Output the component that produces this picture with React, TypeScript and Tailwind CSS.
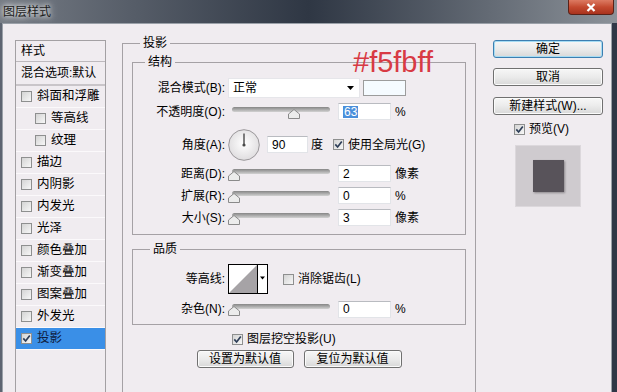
import React from "react";

const styles = [
  { name: "斜面和浮雕" },
  { name: "等高线", sub: true },
  { name: "纹理", sub: true },
  { name: "描边" },
  { name: "内阴影" },
  { name: "内发光" },
  { name: "光泽" },
  { name: "颜色叠加" },
  { name: "渐变叠加" },
  { name: "图案叠加" },
  { name: "外发光" },
  { name: "投影", active: true },
];

function Check({ on }: { on?: boolean }) {
  return (
    <span className="flex h-[11px] w-[11px] shrink-0 items-center justify-center border border-[#8e8f8f] bg-linear-to-br from-[#d4d4d4] to-[#f7f7f7]">
      {on && (
        <svg width="9" height="9" viewBox="0 0 9 9">
          <path d="M1.3 4.4 L3.6 7 L7.8 1.4" fill="none" stroke="#2e3e58" strokeWidth="1.7" />
        </svg>
      )}
    </span>
  );
}

function Slider({ pos }: { pos: number }) {
  return (
    <div className="relative ml-[3px] h-full w-[105px] shrink-0">
      <div className="absolute left-[4px] right-[3px] top-[4px] h-[5px] rounded-full bg-linear-to-b from-[#868686] to-[#d2d2d2]" />
      <svg className="absolute top-[6px]" style={{ left: pos }} width="12" height="10" viewBox="0 0 12 10">
        <path d="M6 0.5 L11.5 5 L11.5 9.5 L0.5 9.5 L0.5 5 Z" fill="#ececec" stroke="#8a8a8a" />
      </svg>
    </div>
  );
}

function Field({ value, w, selected }: { value: string; w: string; selected?: boolean }) {
  return (
    <div className={`flex h-[17px] shrink-0 items-center border border-[#e2e4e8] border-t-[#b9bbc0] bg-white pl-[4px] ${w}`}>
      {selected ? <span className="bg-[#4a8fdb] px-[1px] text-white">{value}</span> : <span>{value}</span>}
    </div>
  );
}

function Label({ children }: { children: React.ReactNode }) {
  return <span className="w-[92px] shrink-0 text-right">{children}</span>;
}

function Btn({ children, primary, className }: { children: React.ReactNode; primary?: boolean; className: string }) {
  return (
    <div
      className={`flex h-[18px] items-center justify-center rounded-[3px] border bg-linear-to-b from-[#f7f7f7] via-[#ebebeb] to-[#d8d8d8] ${
        primary ? "border-[#3c7fb1] shadow-[inset_0_0_0_1px_#a6dcf3]" : "border-[#707070] shadow-[inset_0_0_0_1px_#fbfbfb]"
      } ${className}`}
    >
      {children}
    </div>
  );
}

export default function App() {
  return (
    <div className="relative flex h-[392px] w-[617px] flex-col overflow-hidden bg-[#3d4553] font-['Liberation_Sans','Noto_Sans_CJK_SC',sans-serif] text-[12px] leading-none text-black">
      {/* title bar */}
      <div className="relative flex h-[23px] shrink-0 items-center bg-linear-to-r from-[#767c85] via-[#2f3744] to-[#8c9299] pl-[3px]">
        <span className="text-[12px] text-[#1b1b1b] [text-shadow:0_0_5px_#ffffff,0_0_8px_#e8e8e8]">图层样式</span>
        <div className="absolute right-[3px] top-0 flex h-[15px] w-[46px] items-center justify-center rounded-b-[4px] border border-t-0 border-[#5a2218] bg-linear-to-b from-[#dc7a62] via-[#c44a30] to-[#a9321d]">
          <svg width="10" height="9" viewBox="0 0 10 9">
            <path d="M1.5 1 L8.5 8 M8.5 1 L1.5 8" stroke="#ffffff" strokeWidth="2.2" />
          </svg>
        </div>
      </div>

      <div className="flex min-h-0 flex-1">
        <div className="w-[2px] bg-[#5d6471]" />
        <div className="flex flex-1 items-start border-x border-t border-[#9aa0a8] bg-[#f0ecf0]">
          {/* style list */}
          <div className="ml-[12px] mt-[16px] flex h-[400px] w-[91px] shrink-0 flex-col border border-[#a3a0a3]">
            <div className="flex h-[21px] items-center border-b border-[#bdb9bd] pl-[5px]">样式</div>
            <div className="flex h-[24px] items-center border-b-[2px] border-[#c9c5c9] pl-[5px] whitespace-nowrap">混合选项:默认</div>
            {styles.map((s) => (
              <div
                key={s.name}
                className={`flex h-[22px] items-center gap-[5px] border-b border-[#fbf9fb] ${s.sub ? "pl-[19px]" : "pl-[5px]"} ${
                  s.active ? "bg-[#3a8fe7] text-[#0f1c3e]" : ""
                }`}
              >
                <Check on={s.active} />
                <span className="text-[12.5px]">{s.name}</span>
              </div>
            ))}
          </div>

          {/* drop shadow settings */}
          <fieldset className="ml-[16px] mt-[11px] h-[400px] w-[354px] shrink-0 border border-[#a5a1a5] px-[9px]">
            <legend className="ml-[8px] px-[3px] leading-[16px]">投影</legend>

            <fieldset className="mt-[3px] border border-[#a5a1a5] pb-[8px] pt-[8px]">
              <legend className="ml-[12px] px-[3px] leading-[16px]">结构</legend>

              <div className="flex h-[20px] items-center">
                <Label>混合模式(B):</Label>
                <div className="ml-[3px] flex h-[20px] w-[132px] items-center justify-between border border-[#e6e6ea] bg-white pl-[4px] pr-[5px]">
                  <span>正常</span>
                  <svg width="7" height="4" viewBox="0 0 7 4">
                    <path d="M0 0 L7 0 L3.5 4 Z" fill="#000" />
                  </svg>
                </div>
                <div className="ml-[3px] h-[16px] w-[43px] border border-[#9c9c9c] bg-[#f5fbff]" />
              </div>

              <div className="mt-[5px] flex h-[17px] items-center">
                <Label>不透明度(O):</Label>
                <Slider pos={60} />
                <div className="ml-[5px]">
                  <Field value="63" w="w-[53px]" selected />
                </div>
                <span className="ml-[4px]">%</span>
              </div>

              <div className="mt-[9px] flex h-[31px] items-center">
                <Label>角度(A):</Label>
                <svg className="ml-[3px] shrink-0" width="32" height="32" viewBox="0 0 32 32">
                  <defs>
                    <radialGradient id="dial" cx="50%" cy="45%" r="60%">
                      <stop offset="0%" stopColor="#ffffff" />
                      <stop offset="100%" stopColor="#dcdadc" />
                    </radialGradient>
                  </defs>
                  <circle cx="16" cy="16" r="15.3" fill="url(#dial)" stroke="#9a979a" />
                  <line x1="16" y1="16" x2="16" y2="4.5" stroke="#4a4a4a" strokeWidth="1.4" />
                  <circle cx="16" cy="16" r="1.6" fill="#4a4a4a" />
                </svg>
                <div className="ml-[7px]">
                  <Field value="90" w="w-[41px]" />
                </div>
                <span className="ml-[3px]">度</span>
                <span className="ml-[10px]">
                  <Check on />
                </span>
                <span className="ml-[4px]">使用全局光(G)</span>
              </div>

              {[
                { label: "距离(D):", value: "2", unit: "像素" },
                { label: "扩展(R):", value: "0", unit: "%" },
                { label: "大小(S):", value: "3", unit: "像素" },
              ].map((r) => (
                <div key={r.label} className="mt-[5px] flex h-[17px] items-center">
                  <Label>{r.label}</Label>
                  <Slider pos={0} />
                  <div className="ml-[5px]">
                    <Field value={r.value} w="w-[53px]" />
                  </div>
                  <span className="ml-[4px]">{r.unit}</span>
                </div>
              ))}
            </fieldset>

            <fieldset className="mt-[6px] border border-[#a5a1a5] pb-[6px] pt-[7px]">
              <legend className="ml-[17px] px-[3px] leading-[16px]">品质</legend>

              <div className="flex h-[30px] items-center">
                <Label>等高线:</Label>
                <svg className="ml-[3px] shrink-0" width="40" height="30" viewBox="0 0 40 30">
                  <rect x="0.5" y="0.5" width="39" height="29" fill="#ffffff" stroke="#000" />
                  <path d="M1 29 L29 1 L29 29 Z" fill="#a6a3a6" />
                  <line x1="29.5" y1="0.5" x2="29.5" y2="29.5" stroke="#000" />
                  <path d="M32 12.5 L37 12.5 L34.5 15.5 Z" fill="#000" />
                </svg>
                <span className="ml-[15px]">
                  <Check />
                </span>
                <span className="ml-[4px]">消除锯齿(L)</span>
              </div>

              <div className="mt-[6px] flex h-[18px] items-center">
                <Label>杂色(N):</Label>
                <Slider pos={0} />
                <div className="ml-[5px]">
                  <Field value="0" w="w-[53px]" />
                </div>
                <span className="ml-[4px]">%</span>
              </div>
            </fieldset>

            <div className="mt-[6px] flex h-[16px] items-center gap-[4px] pl-[100px]">
              <Check on />
              <span>图层挖空投影(U)</span>
            </div>

            <div className="mt-[3px] flex justify-center gap-[10px]">
              <Btn className="w-[97px]">设置为默认值</Btn>
              <Btn className="w-[98px]">复位为默认值</Btn>
            </div>
          </fieldset>

          {/* buttons & preview */}
          <div className="ml-[17px] mt-[16px] flex w-[110px] shrink-0 flex-col">
            <Btn primary className="w-full">确定</Btn>
            <Btn className="mt-[10px] w-full">取消</Btn>
            <Btn className="mt-[11px] w-full">新建样式(W)...</Btn>
            <div className="mt-[6px] flex h-[16px] items-center gap-[4px] pl-[21px]">
              <Check on />
              <span>预览(V)</span>
            </div>
            <div className="ml-[22px] mt-[8px] flex h-[62px] w-[66px] items-center justify-center border border-[#dcd8dc] bg-[#cfcbcf]">
              <div className="h-[32px] w-[31px] bg-[#58535a] shadow-[1px_1px_2px_#8c888c]" />
            </div>
          </div>
        </div>
        <div className="w-[5px] bg-[#2f3746]" />
      </div>

      {/* colour annotation */}
      <span className="absolute left-[353px] top-[48px] font-['Liberation_Sans',sans-serif] text-[29px] leading-none text-[#d83a44]">
        #f5fbff
      </span>
    </div>
  );
}
